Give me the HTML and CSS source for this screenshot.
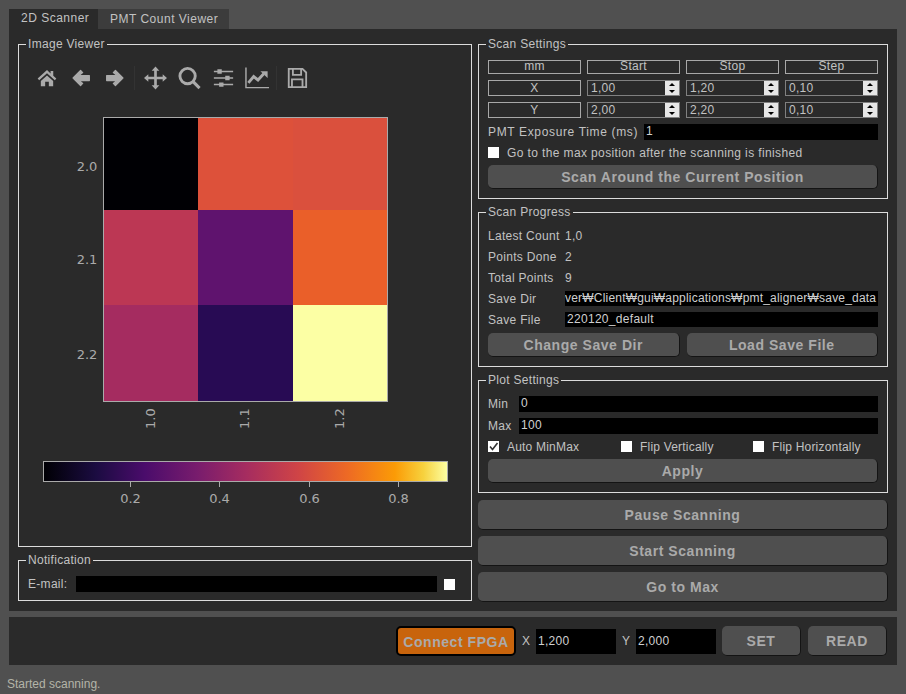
FILE: index.html
```html
<!doctype html>
<html>
<head>
<meta charset="utf-8">
<title>PMT Aligner</title>
<link rel="stylesheet" href="styles.css">
</head>
<body>
<div class="app">

  <div class="tabs">
    <div class="tab tab-active">2D Scanner</div>
    <div class="tab">PMT Count Viewer</div>
  </div>

  <div class="pane">
    <div class="col-left">
      <fieldset class="group viewer">
        <legend>Image Viewer</legend>
        <div class="toolbar">
          <svg class="tool t-home" viewBox="0 0 24 24"><path d="M12 2.500 0.800 12.600l1.800 2L12 6.300l9.400 8.300 1.800-2-3.700-3.300V3.500h-3.200v3z"/><path d="M4.600 15.600 12 8.900l7.400 6.700V22h-5.200v-5.400H9.800V22H4.600z"/></svg>
          <svg class="tool t-arrow" viewBox="0 0 24 24"><path d="M11.500 3 2.500 12l9 9 2.500-2.500L9.500 15H22V9H9.500L14 5.500z" stroke="#aaa" stroke-width="1.500" stroke-linejoin="round"/></svg>
          <svg class="tool t-arrow" viewBox="0 0 24 24"><path d="M12.500 3 21.500 12l-9 9-2.500-2.500L14.500 15H2V9h12.500L10 5.500z" stroke="#aaa" stroke-width="1.500" stroke-linejoin="round"/></svg>
          <span class="tool-sep"></span>
          <svg class="tool t-move" viewBox="0 0 24 24"><path d="M12 0l4 4.500h-2.600v6.100h6.100V8l4.500 4-4.500 4v-2.600h-6.100v6.100H16L12 24l-4-4.500h2.600v-6.100H4.500V16L0 12l4.500-4v2.600h6.100V4.500H8z"/></svg>
          <svg class="tool t-zoom" viewBox="0 0 24 24"><circle cx="10" cy="10" r="8" fill="none" stroke="#aaa" stroke-width="3"/><path d="M15.500 15.500 22.500 22.500" stroke="#aaa" stroke-width="3.200"/></svg>
          <svg class="tool t-sliders" viewBox="0 0 24 24"><path d="M1 4.500h22M1 12h22M1 19.500h22" stroke="#aaa" stroke-width="1.600"/><path d="M5 2h5v5H5zM14 9.500h5v5h-5zM7 17h5v5H7z"/></svg>
          <svg class="tool t-chart" viewBox="0 0 26 24"><path d="M1 1v21h24" fill="none" stroke="#aaa" stroke-width="1.500"/><path d="M3.500 17 9 10.500l4.500 3.500 6-6.500" fill="none" stroke="#aaa" stroke-width="3"/><path d="M16 5h7.500v7z"/></svg>
          <span class="tool-sep"></span>
          <svg class="tool t-save" viewBox="0 0 24 24"><path d="M3 2h15l4 4v16H3z M7.500 2.500v6h9v-6 M6.500 22v-8.500h11.500V22" fill="none" stroke="#aaa" stroke-width="2"/></svg>
        </div>

        <svg class="plot" viewBox="19 100 452 446">
          <defs>
            <linearGradient id="inferno">
              <stop offset="0" stop-color="#000004"/>
              <stop offset="0.13" stop-color="#1b0c41"/>
              <stop offset="0.25" stop-color="#4a0c6b"/>
              <stop offset="0.38" stop-color="#781c6d"/>
              <stop offset="0.5" stop-color="#a52c60"/>
              <stop offset="0.63" stop-color="#cf4446"/>
              <stop offset="0.75" stop-color="#ed6925"/>
              <stop offset="0.87" stop-color="#fb9b06"/>
              <stop offset="0.94" stop-color="#f7d13d"/>
              <stop offset="1" stop-color="#fcffa4"/>
            </linearGradient>
          </defs>
          <rect x="104" y="118" width="94" height="92" fill="#000004"/>
          <rect x="198" y="118" width="95" height="92" fill="#dd513a"/>
          <rect x="293" y="118" width="94" height="92" fill="#da503d"/>
          <rect x="104" y="210" width="94" height="95" fill="#bc3754"/>
          <rect x="198" y="210" width="95" height="95" fill="#5f136e"/>
          <rect x="293" y="210" width="94" height="95" fill="#ea5f29"/>
          <rect x="104" y="305" width="94" height="96" fill="#a52c60"/>
          <rect x="198" y="305" width="95" height="96" fill="#280b54"/>
          <rect x="293" y="305" width="94" height="96" fill="#fcffa4"/>
          <rect x="103.500" y="117.500" width="284" height="284" fill="none" stroke="#aaa"/>

          <g class="ticks">
            <text x="87" y="171" text-anchor="middle">2.0</text>
            <text x="87" y="264" text-anchor="middle">2.1</text>
            <text x="87" y="359" text-anchor="middle">2.2</text>
            <text transform="translate(155 429) rotate(-90)">1.0</text>
            <text transform="translate(249 429) rotate(-90)">1.1</text>
            <text transform="translate(344 429) rotate(-90)">1.2</text>
          </g>

          <rect x="43.500" y="461.500" width="404" height="20" fill="url(#inferno)" stroke="#aaa"/>
          <path d="M130.500 482v5M219.500 482v5M309.500 482v5M398.500 482v5" stroke="#aaa"/>
          <g class="ticks">
            <text x="130.500" y="503" text-anchor="middle">0.2</text>
            <text x="219.500" y="503" text-anchor="middle">0.4</text>
            <text x="309.500" y="503" text-anchor="middle">0.6</text>
            <text x="398.500" y="503" text-anchor="middle">0.8</text>
          </g>
        </svg>
      </fieldset>

      <fieldset class="group notify">
        <legend>Notification</legend>
        <div class="notify-row">
          <span>E-mail:</span>
          <div class="field grow"></div>
          <span class="check"></span>
        </div>
      </fieldset>
    </div>

    <div class="col-right">
      <fieldset class="group">
        <legend>Scan Settings</legend>
        <div class="stack">
          <div class="scan-grid head">
            <div class="cell">mm</div>
            <div class="cell">Start</div>
            <div class="cell">Stop</div>
            <div class="cell">Step</div>
          </div>
          <div class="scan-grid">
            <div class="cell">X</div>
            <div class="spin"><span>1,00</span><div class="spin-btns"><i class="up"></i><i class="down"></i></div></div>
            <div class="spin"><span>1,20</span><div class="spin-btns"><i class="up"></i><i class="down"></i></div></div>
            <div class="spin"><span>0,10</span><div class="spin-btns"><i class="up"></i><i class="down"></i></div></div>
          </div>
          <div class="scan-grid">
            <div class="cell">Y</div>
            <div class="spin"><span>2,00</span><div class="spin-btns"><i class="up"></i><i class="down"></i></div></div>
            <div class="spin"><span>2,20</span><div class="spin-btns"><i class="up"></i><i class="down"></i></div></div>
            <div class="spin"><span>0,10</span><div class="spin-btns"><i class="up"></i><i class="down"></i></div></div>
          </div>
          <div class="row-exposure">
            <span class="exposure-label">PMT Exposure Time (ms)</span>
            <div class="field grow">1</div>
          </div>
          <label class="check-row"><span class="check"></span>Go to the max position after the scanning is finished</label>
          <div class="btn">Scan Around the Current Position</div>
        </div>
      </fieldset>

      <fieldset class="group">
        <legend>Scan Progress</legend>
        <div class="stack">
          <div class="info"><span>Latest Count</span><span>1,0</span></div>
          <div class="info"><span>Points Done</span><span>2</span></div>
          <div class="info"><span>Total Points</span><span>9</span></div>
          <div class="info"><span>Save Dir</span><div class="field path">ver₩Client₩gui₩applications₩pmt_aligner₩save_data</div></div>
          <div class="info"><span>Save File</span><div class="field">220120_default</div></div>
          <div class="btn-pair">
            <div class="btn">Change Save Dir</div>
            <div class="btn">Load Save File</div>
          </div>
        </div>
      </fieldset>

      <fieldset class="group">
        <legend>Plot Settings</legend>
        <div class="stack">
          <div class="minmax"><span>Min</span><div class="field tall">0</div></div>
          <div class="minmax"><span>Max</span><div class="field tall">100</div></div>
          <div class="plot-checks">
            <label class="check-row">
              <span class="check"><svg viewBox="0 0 11 11"><path d="M2 5.500 4.500 8.500 9.500 2" fill="none" stroke="#333" stroke-width="1.600"/></svg></span>Auto MinMax
            </label>
            <label class="check-row"><span class="check"></span>Flip Vertically</label>
            <label class="check-row"><span class="check"></span>Flip Horizontally</label>
          </div>
          <div class="btn">Apply</div>
        </div>
      </fieldset>

      <div class="main-btns">
        <div class="btn btn-big">Pause Scanning</div>
        <div class="btn btn-big">Start Scanning</div>
        <div class="btn btn-big">Go to Max</div>
      </div>
    </div>
  </div>

  <div class="bottom-bar">
    <div class="btn btn-connect">Connect FPGA</div>
    <span class="axis">X</span>
    <div class="field pos">1,200</div>
    <span class="axis">Y</span>
    <div class="field pos">2,000</div>
    <div class="btn btn-small">SET</div>
    <div class="btn btn-small">READ</div>
  </div>

  <div class="status">Started scanning.</div>
</div>
</body>
</html>
```

FILE: styles.css
```css
* {
  box-sizing: border-box;
}

html, body {
  margin: 0;
  height: 100%;
}

body {
  background: #505050;
  color: #c2c2c2;
  font: 12px "Liberation Sans", Arial, sans-serif;
  letter-spacing: 0.3px;
  overflow: hidden;
}

.app {
  width: 906px;
  height: 694px;
  padding: 9px 9px 0;
}

/* tabs */

.tabs {
  display: flex;
  height: 20px;
}

.tab {
  padding: 3px 0 0 12px;
  background: #3c3c3c;
  width: 131px;
  letter-spacing: 0.5px;
  white-space: nowrap;
}

.tab-active {
  background: #2a2a2a;
  padding-top: 2px;
  width: 89px;
}

.pane {
  display: flex;
  gap: 6px;
  height: 582px;
  padding: 8px 9px 0;
  background: #2a2a2a;
}

.col-left {
  display: flex;
  flex-direction: column;
  gap: 6px;
  width: 454px;
  height: 564px;
}

.col-right {
  display: flex;
  flex-direction: column;
  gap: 6px;
  width: 410px;
}

/* group boxes */

.group {
  margin: 0;
  min-width: 0;
  padding: 0 9px 9px;
  border: 1px solid #dcdcdc;
}

.group legend {
  margin-left: -2px;
  padding: 0 2px;
  line-height: 14px;
}

.viewer {
  flex: 1;
  padding: 0;
}

.viewer legend {
  margin-left: 7px;
}

.notify {
  padding-bottom: 8px;
}

.toolbar {
  display: flex;
  align-items: center;
  height: 24px;
  margin: 15px 0 10px;
  padding-left: 18px;
}

.tool {
  display: block;
  height: 24px;
  fill: #aaa;
  flex: none;
}

.t-home {
  width: 20px;
}

.t-arrow {
  width: 20px;
  margin-left: 14px;
}

.t-move {
  width: 23px;
  margin-left: 9px;
}

.t-zoom {
  width: 23px;
  margin-left: 11px;
}

.t-sliders {
  width: 21px;
  margin-left: 12px;
}

.t-chart {
  width: 25px;
  margin-left: 11px;
}

.t-save {
  width: 22px;
  margin-left: 9px;
}

.tool-sep {
  width: 1px;
  height: 24px;
  margin-left: 9px;
  background: #333;
}

.t-chart + .tool-sep {
  margin-left: 6px;
}

.plot {
  display: block;
  width: 452px;
  height: 446px;
}

.ticks text {
  fill: #aaa;
  font: 13px "DejaVu Sans", sans-serif;
  letter-spacing: 0;
}

.notify-row {
  display: flex;
  align-items: center;
  gap: 9px;
  padding-top: 9px;
}

.notify-row .check {
  margin: 0 7px 0 -2px;
}

.stack {
  display: flex;
  flex-direction: column;
  gap: 6px;
  padding-top: 9px;
}

/* scan settings */

.scan-grid {
  display: grid;
  grid-template-columns: repeat(4, 93px);
  gap: 6px;
  height: 16px;
  line-height: 14px;
}

.scan-grid.head {
  height: 14px;
  line-height: 11px;
}

.cell {
  border: 1px solid #a8a8a8;
  text-align: center;
}

.spin {
  display: flex;
  justify-content: space-between;
  border: 1px solid #808080;
  padding-left: 3px;
}

.spin-btns {
  display: flex;
  flex-direction: column;
  width: 14px;
}

.spin-btns i {
  display: block;
  height: 7px;
  background: #e6e6e6;
  position: relative;
}

.spin-btns i::after {
  content: "";
  position: absolute;
  left: 4px;
  top: 2px;
  border-left: 3px solid transparent;
  border-right: 3px solid transparent;
}

.spin-btns .up::after {
  border-bottom: 3px solid #000;
}

.spin-btns .down::after {
  border-top: 3px solid #000;
}

.field {
  height: 15px;
  padding-left: 2px;
  background: #000;
  color: #d0d0d0;
  line-height: 15px;
  white-space: nowrap;
  overflow: hidden;
}

.field.path {
  padding-left: 0;
  letter-spacing: 0.2px;
}

.field.tall, .grow {
  height: 16px;
}

.grow {
  flex: 1;
}

.row-exposure {
  display: flex;
  gap: 6px;
  height: 16px;
  line-height: 16px;
}

.exposure-label {
  width: 150px;
  letter-spacing: 0.65px;
  white-space: nowrap;
}

.check-row {
  display: flex;
  align-items: center;
  gap: 8px;
  height: 13px;
  letter-spacing: 0.38px;
}

.plot-checks .check-row {
  letter-spacing: 0.2px;
}

.check {
  display: block;
  flex: none;
  width: 11px;
  height: 11px;
  background: #fff;
}

.check svg {
  display: block;
}

/* buttons */

.btn {
  height: 24px;
  background: #4f4f4f;
  border-radius: 5px;
  border-right: 1px solid #141414;
  border-bottom: 1px solid #141414;
  color: #aaa;
  font: bold 14px/24px "Liberation Sans", Arial, sans-serif;
  letter-spacing: 0.55px;
  text-align: center;
}

.btn-pair {
  display: grid;
  grid-template-columns: 1fr 1fr;
  gap: 7px;
}

.main-btns {
  display: flex;
  flex-direction: column;
  gap: 6px;
  margin-top: 1px;
}

.btn-big {
  height: 30px;
  line-height: 30px;
}

/* scan progress */

.info {
  display: grid;
  grid-template-columns: 77px 1fr;
  height: 15px;
  line-height: 16px;
}

.minmax {
  display: grid;
  grid-template-columns: 31px 1fr;
  height: 16px;
  line-height: 16px;
}

.plot-checks {
  display: grid;
  grid-template-columns: 133px 132px 1fr;
}

/* bottom bar */

.bottom-bar {
  display: flex;
  align-items: center;
  justify-content: flex-end;
  height: 48px;
  margin-top: 6px;
  padding-right: 10px;
  background: #2a2a2a;
}

.btn-connect {
  width: 120px;
  height: 30px;
  background: #c8640c;
  border: 2px solid #000;
  line-height: 28px;
}

.axis {
  width: 8px;
  margin: 0 6px;
}

.field.pos {
  width: 80px;
  height: 25px;
  line-height: 25px;
}

.btn-small {
  width: 79px;
  height: 30px;
  margin-left: 6px;
  line-height: 30px;
}

.btn-small:last-child {
  margin-left: 7px;
}

.status {
  margin-left: -2px;
  padding-top: 12px;
  color: #b4b4a8;
  letter-spacing: 0;
}
```
